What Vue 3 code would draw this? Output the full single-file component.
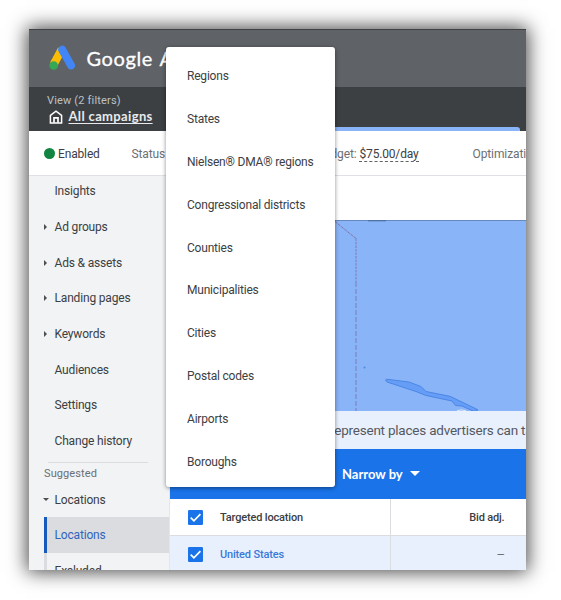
<script setup>
const menu = ['Regions', 'States', 'Nielsen® DMA® regions', 'Congressional districts', 'Counties', 'Municipalities', 'Cities', 'Postal codes', 'Airports', 'Boroughs']
const nav = [
  { label: 'Insights' },
  { label: 'Ad groups', sub: true },
  { label: 'Ads & assets', sub: true },
  { label: 'Landing pages', sub: true },
  { label: 'Keywords', sub: true },
  { label: 'Audiences' },
  { label: 'Settings' },
  { label: 'Change history' },
]
</script>

<template>
  <div class="page">
    <div class="window">
      <header class="brand">
        <svg class="logo" width="28" height="26" viewBox="0 0 28 26">
          <path d="M12.600 4.500 4.600 19.500" stroke="#fbbc04" stroke-width="8" />
          <path d="M13.200 4.800 22 20.400" stroke="#4285f4" stroke-width="8" stroke-linecap="round" />
          <circle cx="4.700" cy="20.500" r="4.300" fill="#34a853" />
        </svg>
        <span class="wordmark">Google A</span>
      </header>
      <div class="scope">
        <div class="view">View (2 filters)</div>
        <div class="campaigns">
          <svg width="14" height="14" viewBox="0 0 14 14" fill="none" stroke="#fff">
            <path d="M1.4 12.9V5.4L7 1.2l5.6 4.2v7.500z" stroke-width="1.500" />
            <path d="M5 12.700V7.800h4v4.900" stroke-width="1.700" />
          </svg>
          <span class="all">All campaigns</span>
        </div>
        <div class="tab"></div>
      </div>
      <div class="status">
        <span class="dot"></span>
        <span class="enabled">Enabled</span>
        <span class="state">Status:</span>
        <span class="budget">Budget: <span class="amount">$75.00/day</span></span>
        <span class="opt">Optimization</span>
      </div>
      <div class="body">
        <nav class="side">
          <div v-for="n in nav" :key="n.label" class="item">
            <span class="gutter"><i v-if="n.sub" class="right"></i></span>{{ n.label }}
          </div>
          <div class="rule"></div>
          <div class="suggested">Suggested</div>
          <div class="item parent"><span class="gutter"><i class="down"></i></span>Locations</div>
          <div class="item child active">Locations</div>
          <div class="item child">Excluded</div>
        </nav>
        <main class="main">
          <div class="blank"></div>
          <svg class="map" width="356" height="191" viewBox="0 0 356 191">
            <rect width="356" height="191" fill="#8ab4f8" />
            <path d="M0 .5H356" stroke="#6689bd" />
            <path d="M198 .8h18" stroke="#47699b" />
            <path d="M165 1.5 186 18.5" stroke="#8172a7" stroke-dasharray="3 1" fill="none" />
            <path d="M186 18.5V62" stroke="#8078b1" stroke-dasharray="2.5 1" />
            <path d="M186 62V191" stroke="#7b7fb9" stroke-dasharray="5 2" />
            <circle cx="194.5" cy="147.5" r="1" fill="#4f88dc" />
            <path d="M215.5 160 216.5 159.2 239 162 251 166.5 256 171.5 280 176.3 308 189.8 306 191H303L292 186 285.5 185.5 282 181 256 175.5 246 171.5 217 162Z" fill="#669df6" stroke="#4b87e5" />
            <path d="M287 190.7q4-1.5 9 0" stroke="#dbe8ff" stroke-width="1" fill="none" />
          </svg>
          <div class="note"><span>represent places advertisers can target</span></div>
          <div class="toolbar"><span>Narrow by</span><i></i></div>
          <div class="row head">
            <div class="place">
              <svg class="check" width="15" height="15" viewBox="0 0 15 15"><rect width="15" height="15" rx="1.2" fill="#1a73e8" /><path d="m2.7 7.6 3.2 3.2 6.5-6.7" fill="none" stroke="#fff" stroke-width="1.7" /></svg>
              <span>Targeted location</span>
            </div>
            <div class="bid">Bid adj.</div>
          </div>
          <div class="row data">
            <div class="place">
              <svg class="check" width="15" height="15" viewBox="0 0 15 15"><rect width="15" height="15" rx="1.2" fill="#1a73e8" /><path d="m2.7 7.6 3.2 3.2 6.5-6.7" fill="none" stroke="#fff" stroke-width="1.7" /></svg>
              <span class="link">United States</span>
            </div>
            <div class="bid dash">—</div>
          </div>
        </main>
      </div>
    </div>
    <ul class="menu">
      <li v-for="m in menu" :key="m">{{ m }}</li>
    </ul>
  </div>
</template>

<style>
body { margin: 0; background: #fff; }
</style>

<style scoped>
* { box-sizing: border-box; }
.page { position: relative; width: 561px; height: 600px; padding: 29px; font-family: Roboto, sans-serif; font-size: 12px; color: #3c4043; overflow: hidden; }
.window { width: 496.5px; height: 541px; overflow: hidden; background: #fff; box-shadow: 0 0 18px 2px rgba(0, 0, 0, .72); white-space: nowrap; }
.brand { height: 58px; background: #5f6368; border-top: 1px solid #3f4245; display: flex; align-items: center; padding-left: 19.5px; }
.logo { flex: none; margin-top: -1px; }
.wordmark { margin: -2px 0 0 10px; font: 20px Lato, sans-serif; color: #fff; letter-spacing: .6px; word-spacing: 1.5px; -webkit-text-stroke: .3px #fff; }
.scope { position: relative; height: 44px; background: #3c4043; padding: 7px 0 0 18px; }
.view { color: #bdc1c6; font-size: 11px; line-height: 14px; letter-spacing: .17px; }
.campaigns { display: flex; align-items: center; height: 17px; padding-left: 2px; gap: 5.5px; }
.all { color: #e8eaed; font: 700 13px/15px Lato, sans-serif; letter-spacing: .35px; text-decoration: underline; text-underline-offset: 2px; }
.tab { position: absolute; left: 290px; right: 6px; bottom: 0; height: 4px; background: #8ab4f8; border-top-right-radius: 3px; }
.status { height: 45px; border-bottom: 1px solid #dfe1e4; display: grid; grid-template-columns: 11px 77px 185px 156px 1fr; align-items: center; padding: 1px 0 0 14.5px; color: #6b6f74; letter-spacing: -.1px; }
.dot { width: 11px; height: 11px; border-radius: 50%; background: #118442; }
.enabled { color: #3c4043; padding-left: 3.5px; letter-spacing: -.15px; }
.amount { color: #3c4043; letter-spacing: -.17px; border-bottom: 1px dashed #5f6368; }
.body { display: flex; height: 394px; }
.side { width: 141px; flex: none; background: #f1f3f4; border-right: 1px solid #e4e6e8; letter-spacing: -.17px; }
.item { height: 35.7px; display: flex; align-items: center; padding-left: 15px; }
.item:first-child { height: 33px; padding-bottom: 2.5px; }
.gutter { width: 10.5px; flex: none; display: flex; align-items: center; }
.right { border: 3px solid transparent; border-left: 3.5px solid #4b4f53; border-right: 0; }
.down { border: 3px solid transparent; border-top: 3.5px solid #4b4f53; border-bottom: 0; margin-left: -1px; }
.rule { height: 1px; background: #dadce0; margin: 3px 21px 0 19px; }
.suggested { height: 22px; line-height: 22px; padding-left: 15px; font-size: 11px; color: #6b6f74; letter-spacing: .1px; }
.parent { height: 32.5px; padding-bottom: 3px; }
.child { margin-left: 15px; padding-left: 7.5px; border-left: 3px solid #dadce0; }
.active { background: #dadce0; border-left-color: #185abc; color: #2f65bd; }
.main { flex: 1; min-width: 0; }
.blank { height: 43.5px; }
.map { display: block; }
.note { height: 38px; background: #e8f0fe; display: flex; align-items: center; padding-left: 160px; font-size: 13.5px; letter-spacing: -.22px; color: #55595e; }
.toolbar { height: 50.5px; background: #1a73e8; color: #fff; display: flex; align-items: center; padding-left: 172px; font: 700 13px Lato, sans-serif; gap: 7px; }
.toolbar i { border: 5px solid transparent; border-top-color: #fff; border-bottom: 0; }
.row { display: grid; grid-template-columns: 221px 1fr; height: 37px; font-size: 11px; font-weight: 500; letter-spacing: -.17px; }
.head { border-bottom: 1px solid #dadce0; }
.data { background: #e8f0fe; }
.place { display: flex; align-items: center; gap: 17.5px; padding-left: 17.5px; border-right: 1px solid #dadce0; }
.bid { display: flex; align-items: center; justify-content: flex-end; padding-right: 21px; }
.dash { font-weight: 400; font-size: 10px; color: #5f6368; }
.link { color: #3c79d8; }
.menu { position: absolute; left: 166px; top: 47px; width: 169px; height: 440px; margin: 0; padding: 7.6px 0 0; list-style: none; background: #fff; border-radius: 3px; box-shadow: 0 1px 4px rgba(0, 0, 0, .45); letter-spacing: -.2px; }
.menu li { height: 42.9px; display: flex; align-items: center; padding-left: 21px; white-space: nowrap; }
</style>
